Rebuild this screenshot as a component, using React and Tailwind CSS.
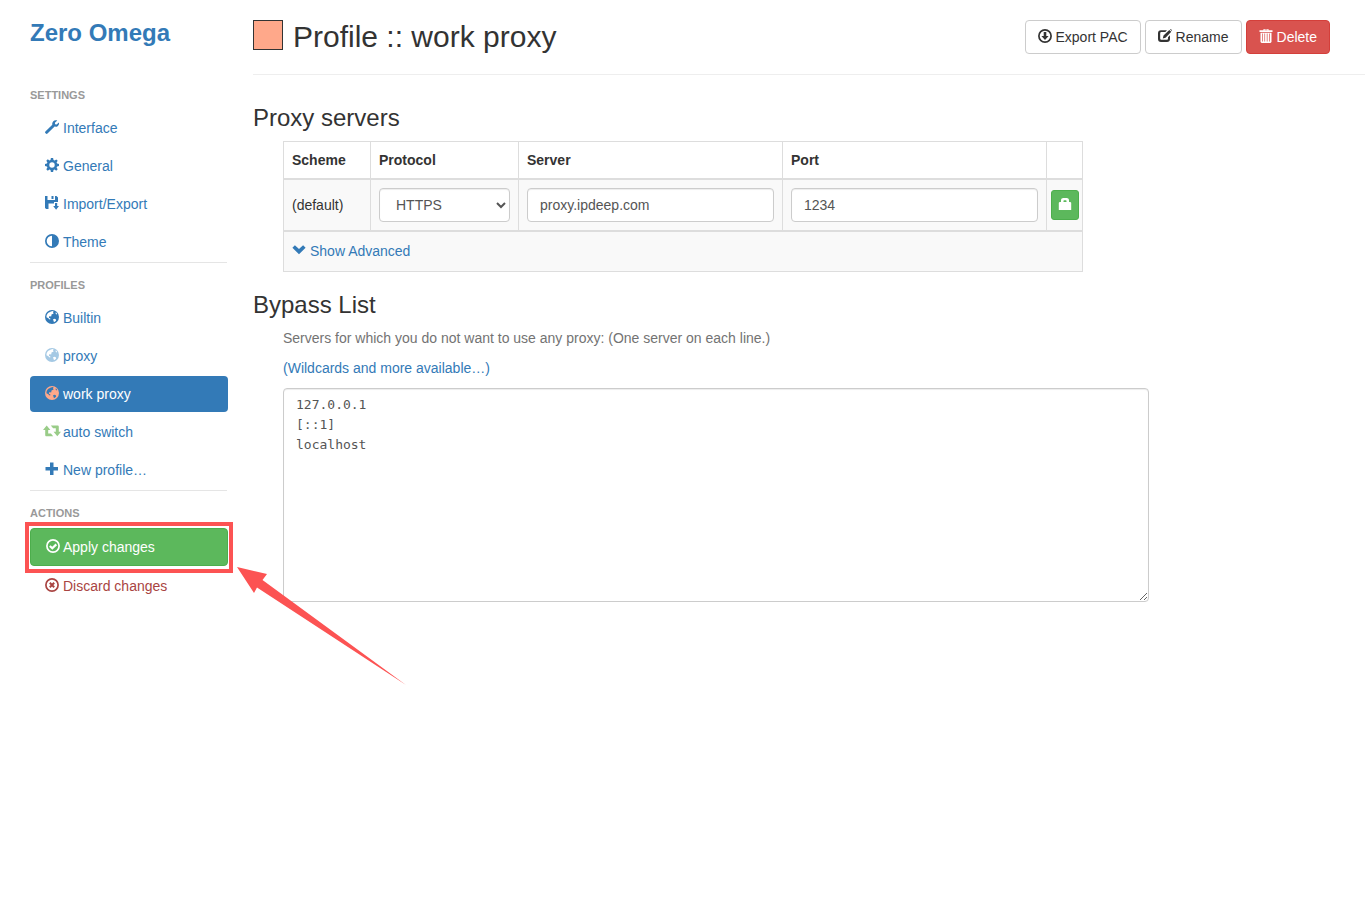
import React, { useState } from "react";

const svgProps = { width: 14, height: 14, viewBox: "0 0 14 14", fill: "currentColor", "aria-hidden": true };

function Icon({ children, className = "" }) {
  return <svg {...svgProps} className={`mb-0.5 inline-block shrink-0 ${className}`}>{children}</svg>;
}

const WrenchIcon = () => (
  <Icon>
    <path d="M12.300.6 9.900 2.800l.2 1.500 1.500.3L13.900 2.400c.4 1.500-.1 2.700-1 3.500-.9.8-2 1-3.300.7L2.500 13.500c-.5.5-1.200.5-1.700 0l-.4-.4c-.5-.5-.5-1.100 0-1.600L7.300 4.700C7 3.400 7.400 2.100 8.300 1.200 9.300.2 10.800-.1 12.300.6z" />
  </Icon>
);

const GearIcon = () => (
  <Icon>
    <path fillRule="evenodd" d="M5.900 0h2.200l.4 1.900 1.100.5L11.300 1.400 12.700 2.800 11.600 4.400 12.100 5.500 14 5.900v2.200l-1.900.4-.5 1.100 1.100 1.600-1.500 1.500-1.600-1.100-1.100.5L8.100 14H5.900l-.4-1.900-1.100-.5-1.600 1.100-1.500-1.500 1.100-1.600-.5-1.100L0 8.100V5.900l1.900-.4.5-1.100L1.300 2.800l1.500-1.500 1.600 1.100 1.100-.5zM7 4.300a2.700 2.700 0 1 0 0 5.400 2.700 2.700 0 0 0 0-5.400z" />
  </Icon>
);

const SaveIcon = () => (
  <Icon>
    <path d="M0 0h2.500v4h7.500V0h1.500L13 1.500V6H9v1.500H3.500V13H1.200L0 12z" />
    <path d="M6.500 0h2v3h-2zM10 7h2.200v3H14l-2.900 3.800L8.200 10H10z" />
  </Icon>
);

const ContrastIcon = () => (
  <Icon>
    <path fillRule="evenodd" d="M7 0a7 7 0 1 0 0 14A7 7 0 0 0 7 0zm0 1.700v10.600A5.300 5.300 0 0 1 7 1.700z" />
  </Icon>
);

const GlobeIcon = ({ className }) => (
  <Icon className={className}>
    <path fillRule="evenodd" d="M7 0a7 7 0 1 0 0 14A7 7 0 0 0 7 0zM5.900 1.400 7.600 1l1 .6-.6.9.7.8-.9.8-1 .1-.6 1 .4.9-.9.300-.9-.3-.9.900.2.900 1.100.3.200 1-.7.400-1.700-1.600-1.600-.8.300-2.200 1.300-2.100zM10.600 2.600l.6-.1 1 1.500-.5.400-1-.6zM8 9.200l1.700-.4 1.300.8.100.9-1.400 1.500-1.100-.5-.2-1.300z" />
  </Icon>
);

const SwitchIcon = () => (
  <svg width="18" height="14" viewBox="0 0 18 14" fill="currentColor" aria-hidden="true" className="-mx-0.5 mb-0.5 shrink-0 text-[#99cc88]">
    <path d="M3.700 1.500 7.400 6H5.200v3.500h2.700l2.300 2.800H3.500c-.8 0-1.300-.5-1.300-1.300V6H0zM14.300 12.300l-3.700-4.500h2.200V4.300h-2.700L7.800 1.500h6.700c.8 0 1.300.5 1.300 1.300v5H18z" />
  </svg>
);

const PlusIcon = () => (
  <Icon>
    <path d="M5 .5h3.500V5H13v3.500H8.500V13H5V8.500H.5V5H5z" />
  </Icon>
);

const Ring = ({ children }) => (
  <Icon>
    <circle cx="7" cy="7" r="6.100" fill="none" stroke="currentColor" strokeWidth="1.700" />
    {children}
  </Icon>
);

const CheckIcon = () => (
  <Ring>
    <path d="m3.800 7 2.500 2.300 4-3.900" fill="none" stroke="currentColor" strokeWidth="2.200" />
  </Ring>
);

const CrossIcon = () => (
  <Ring>
    <path d="m4.800 4.800 4.400 4.400m0-4.400-4.400 4.400" fill="none" stroke="currentColor" strokeWidth="2" />
  </Ring>
);

const DownloadIcon = () => (
  <Ring>
    <path d="M5.700 3h2.600v4h2.300L7 11 3.400 7h2.300z" />
  </Ring>
);

const EditIcon = () => (
  <Icon>
    <path d="M9 1.200 7.300 3H3.700C2.700 3 2.200 3.500 2.200 4.400v5c0 .9.500 1.400 1.400 1.400h5c.9 0 1.400-.5 1.400-1.400V8.300l2-2V10c0 2-1 3-3 3H3c-2 0-3-1-3-3V4.200c0-2 1-3 3-3z" />
    <path d="M11.300.9 13.300 2.800 7.500 8.700 4.800 9.400l.7-2.800zM12 .3l.8-.3L14 1.200l-.2.900z" />
  </Icon>
);

const TrashIcon = () => (
  <Icon>
    <path d="M4.500 0h5v1.300H13.500V3H.5V1.300h4zm1 .6v.7h3V.6z" fillRule="evenodd" />
    <path fillRule="evenodd" d="M1.500 3.800h11V13l-1 1h-9l-1-1zM3 4.500V12.500h.7v-8zm2.400 0V12.500h.7v-8zm2.400 0V12.500h.7v-8zm2.400 0V12.500h.7v-8z" />
  </Icon>
);

const ChevronIcon = () => (
  <Icon>
    <path d="M.4 4.700 2.900 2.200 7 6.100l4.100-3.900L13.600 4.700 7 11.200z" />
  </Icon>
);

const LockIcon = () => (
  <Icon>
    <path fillRule="evenodd" d="M3 5V3.500C3 1.700 4.200 1 5.300 1h3.400C9.800 1 11 1.700 11 3.500V5h1.400l.8.800V13H.8V5.800L1.600 5zm2.500 0h3V3.800L8 3.200H6l-.5.600z" />
  </Icon>
);

function NavHeading({ children }) {
  return <h2 className="flex h-[30px] items-center text-[11px] font-bold uppercase text-[#999]">{children}</h2>;
}

function NavItem({ icon, active, danger, children }) {
  const tone = active ? "bg-[#337ab7] text-white" : danger ? "text-[#a94442]" : "text-[#337ab7]";
  return (
    <li className="mb-0.5">
      <a href="#" aria-current={active ? "page" : undefined} className={`flex h-9 items-center gap-1 rounded px-[15px] ${tone}`}>
        {icon}
        <span>{children}</span>
      </a>
    </li>
  );
}

const Divider = () => <hr className="mb-[7px] mr-px border-t border-[#e5e5e5]" />;

const field = "h-[34px] w-full rounded border border-[#ccc] bg-white px-3 text-[#555] shadow-[inset_0_1px_1px_rgba(0,0,0,0.075)]";
const th = "border border-[#ddd] border-b-2 px-2 text-left font-bold";
const td = "border border-[#ddd] border-b-2 px-2";
const btn = "flex h-[34px] items-center gap-1 rounded border px-3";

export default function App() {
  const [protocol, setProtocol] = useState("HTTPS");
  const [server, setServer] = useState("proxy.ipdeep.com");
  const [port, setPort] = useState("1234");
  const [bypass, setBypass] = useState("127.0.0.1\n[::1]\nlocalhost");

  return (
    <div className="flex min-h-screen bg-white font-['Liberation_Sans',Arial,sans-serif] text-[14px] leading-5 text-[#333]">
      <nav aria-label="Options" className="w-[228px] shrink-0 pl-[30px] pt-5">
        <h1 className="mb-[34px] text-[24px] font-bold leading-[26px] text-[#337ab7]">
          <a href="#">Zero Omega</a>
        </h1>
        <NavHeading>Settings</NavHeading>
        <ul>
          <NavItem icon={<WrenchIcon />}>Interface</NavItem>
          <NavItem icon={<GearIcon />}>General</NavItem>
          <NavItem icon={<SaveIcon />}>Import/Export</NavItem>
          <NavItem icon={<ContrastIcon />}>Theme</NavItem>
        </ul>
        <Divider />
        <NavHeading>Profiles</NavHeading>
        <ul>
          <NavItem icon={<GlobeIcon />}>Builtin</NavItem>
          <NavItem icon={<GlobeIcon className="text-[#a5c9e4]" />}>proxy</NavItem>
          <NavItem active icon={<GlobeIcon className="text-[#ffa88a]" />}>work proxy</NavItem>
          <NavItem icon={<SwitchIcon />}>auto switch</NavItem>
          <NavItem icon={<PlusIcon />}>New profile…</NavItem>
        </ul>
        <Divider />
        <NavHeading>Actions</NavHeading>
        <div className="relative mb-0.5">
          <button type="button" className="flex h-[38px] w-full items-center gap-[3px] rounded border border-[#4cae4c] bg-[#5cb85c] px-[15px] text-white">
            <CheckIcon />
            <span>Apply changes</span>
          </button>
          <div className="pointer-events-none absolute -inset-x-[5px] -bottom-[7px] -top-[6px] border-4 border-[#fc5353]" />
          <svg className="pointer-events-none absolute left-[207px] top-[38px]" width="170" height="120" viewBox="0 0 170 120" fill="#fc5353" aria-hidden="true">
            <path d="M0 1 30 8 25.500 14 169 119 20 21.500 17 27Z" />
          </svg>
        </div>
        <ul>
          <NavItem danger icon={<CrossIcon />}>Discard changes</NavItem>
        </ul>
      </nav>

      <main className="min-w-0 flex-1 pl-[25px] pt-5">
        <header className="flex items-start justify-between gap-4 border-b border-[#eee] pb-5 pr-[35px]">
          <div className="flex items-start gap-2.5">
            <input type="button" aria-label="Profile color" className="size-[30px] border border-[#333] bg-[#ffa88a]" />
            <h1 className="text-[30px] leading-[33px]">Profile :: work proxy</h1>
          </div>
          <div className="flex gap-1">
            <button type="button" className={`${btn} border-[#ccc] bg-white`}><DownloadIcon />Export PAC</button>
            <button type="button" className={`${btn} border-[#ccc] bg-white`}><EditIcon />Rename</button>
            <button type="button" className={`${btn} border-[#d43f3a] bg-[#d9534f] text-white`}><TrashIcon />Delete</button>
          </div>
        </header>

        <section className="pt-[30px]">
          <h2 className="text-[24px] leading-[26px]">Proxy servers</h2>
          <table className="ml-[30px] mt-2.5 w-[799px] max-w-full table-fixed border-collapse border border-[#ddd]">
            <colgroup>
              <col className="w-[87px]" />
              <col className="w-[148px]" />
              <col className="w-[264px]" />
              <col className="w-[264px]" />
              <col className="w-[36px]" />
            </colgroup>
            <thead>
              <tr className="h-[37px]">
                <th className={th}>Scheme</th>
                <th className={th}>Protocol</th>
                <th className={th}>Server</th>
                <th className={th}>Port</th>
                <th className={th} aria-label="Authentication" />
              </tr>
            </thead>
            <tbody className="bg-[#f9f9f9]">
              <tr className="h-[52px]">
                <td className={td}>(default)</td>
                <td className={td}>
                  <select aria-label="Protocol" value={protocol} onChange={(e) => setProtocol(e.target.value)} className={`${field} block`}>
                    <option>HTTP</option>
                    <option>HTTPS</option>
                    <option>SOCKS4</option>
                    <option>SOCKS5</option>
                  </select>
                </td>
                <td className={td}>
                  <input aria-label="Server" type="text" value={server} onChange={(e) => setServer(e.target.value)} className={`${field} block`} />
                </td>
                <td className={td}>
                  <input aria-label="Port" type="text" value={port} onChange={(e) => setPort(e.target.value)} className={`${field} block`} />
                </td>
                <td className="border border-b-2 border-[#ddd] p-0">
                  <button type="button" aria-label="Authentication" className="mx-auto flex h-[30px] w-7 items-center justify-center rounded-[3px] border border-[#4cae4c] bg-[#5cb85c] text-white">
                    <LockIcon />
                  </button>
                </td>
              </tr>
              <tr className="h-[41px]">
                <td colSpan={5} className="border border-[#ddd] px-2">
                  <a href="#" className="flex items-center gap-1 text-[#337ab7]"><ChevronIcon />Show Advanced</a>
                </td>
              </tr>
            </tbody>
          </table>
        </section>

        <section className="pt-5">
          <h2 className="text-[24px] leading-[26px]">Bypass List</h2>
          <div className="ml-[30px] mt-2.5">
            <label htmlFor="bypass" className="block text-[#737373]">
              Servers for which you do not want to use any proxy: (One server on each line.)
            </label>
            <p className="mt-2.5">
              <a href="#" className="text-[#337ab7]">(Wildcards and more available…)</a>
            </p>
            <textarea
              id="bypass"
              spellCheck={false}
              value={bypass}
              onChange={(e) => setBypass(e.target.value)}
              className="mt-2.5 block h-[214px] w-[866px] max-w-full resize rounded border border-[#ccc] px-3 py-1.5 font-['DejaVu_Sans_Mono',monospace] text-[13px] text-[#555] shadow-[inset_0_1px_1px_rgba(0,0,0,0.075)]"
            />
          </div>
        </section>
      </main>
    </div>
  );
}
